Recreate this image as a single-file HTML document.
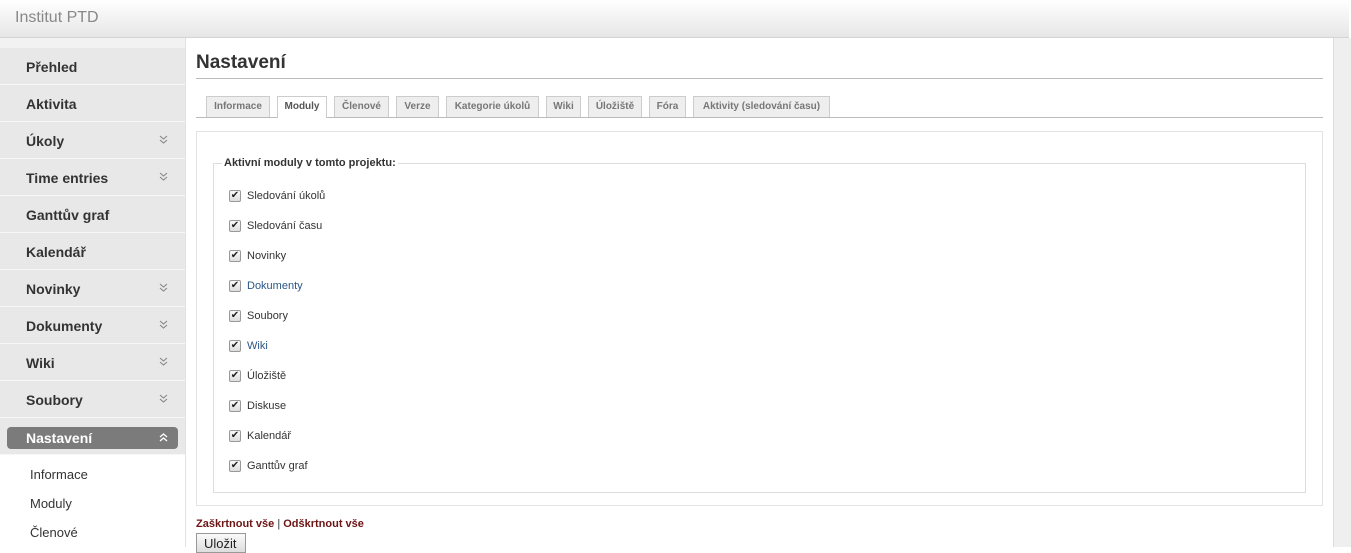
<!DOCTYPE html>
<html><head><meta charset="utf-8"><style>
*{box-sizing:border-box;margin:0;padding:0}
body{width:1351px;height:547px;overflow:hidden;background:#fff;font-family:"Liberation Sans",Arial,sans-serif;position:relative}
#hdr{position:absolute;left:0;top:0;width:1349px;height:38px;background:linear-gradient(#fff,#e6e6e6);border-bottom:1px solid #d4d4d4}
#hdr span{position:absolute;left:15px;top:9px;font-size:16px;color:#888}
#rs{position:absolute;left:1333px;top:38px;width:18px;height:509px;background:#efefef;border-left:1px solid #ddd}
#sb{position:absolute;left:0;top:38px;width:186px;height:509px;background:#fff;border-right:1px solid #e2e2e2}
#sb .top{height:10px;background:#f2f2f2}
.it{height:37px;background:#e8e8e8;border-bottom:1px solid #f7f7f7;position:relative;font-size:14px;font-weight:bold;color:#333;padding:11px 0 0 26px}
.it svg{position:absolute;left:159px;top:13px}
.act{background:#e8e8e8;height:37px;padding:9px 7px 0 7px;border-bottom:1px solid #f7f7f7}
.act div{background:#7b7b7b;border-radius:4px;height:22px;color:#fff;font-size:14px;font-weight:bold;padding:3px 0 0 19px;position:relative}
.act svg{position:absolute;left:152px;top:6px}
.sub{font-size:13px;color:#333;padding-left:30px;height:29px;line-height:20px}
h2{position:absolute;left:196px;top:52px;font-size:19px;color:#333}
#hl{position:absolute;left:196px;top:78px;width:1127px;border-top:1px solid #bbb}
#tabs{position:absolute;left:196px;top:117px;width:1127px;border-top:1px solid #bbb}
.tab{position:absolute;top:96px;height:21px;border:1px solid #ccc;border-bottom:none;background:#eee;font-size:10px;font-weight:bold;color:#777;text-align:center;line-height:20px}
.tab.sel{background:#fff;color:#555;height:22px;z-index:2}
#box{position:absolute;left:196px;top:131px;width:1127px;height:375px;border:1px solid #e3e3e3}
#fs{position:absolute;left:213px;top:163px;width:1093px;height:330px;border:1px solid #ddd}
#lg{position:absolute;left:222px;top:157px;background:#fff;padding:0 2px;font-size:11px;font-weight:bold;color:#333}
.cb{position:absolute;left:229px;width:12px;height:12px;border:1px solid #999;border-radius:2px;background:linear-gradient(#fafafa,#ddd);font-size:10px;line-height:10px;text-align:center;color:#222}
.lb{position:absolute;left:247px;font-size:11px;color:#333;margin-top:1px}
.lb.b{color:#2a5685}
#links{position:absolute;left:196px;top:518px;font-size:11px;font-weight:bold;color:#6d1414}
#links span{color:#333;font-weight:normal}
#btn{position:absolute;left:196px;top:533px;width:50px;height:20px;border:1px solid #999;background:linear-gradient(#fafafa,#ddd);font-size:13px;padding:2px 0 0 7px;color:#222}
</style></head><body>
<div id="hdr"><span>Institut PTD</span></div>
<div id="rs"></div>
<div id="sb"><div class="top"></div>
<div class="it">Přehled</div><div class="it">Aktivita</div>
<div class="it">Úkoly<svg width="9" height="9"><path d="M1 1l3.5 3 3.5-3M1 5l3.5 3 3.5-3" fill="none" stroke="#888" stroke-width="1.1"/></svg></div>
<div class="it">Time entries<svg width="9" height="9"><path d="M1 1l3.5 3 3.5-3M1 5l3.5 3 3.5-3" fill="none" stroke="#888" stroke-width="1.1"/></svg></div>
<div class="it">Ganttův graf</div><div class="it">Kalendář</div>
<div class="it">Novinky<svg width="9" height="9"><path d="M1 1l3.5 3 3.5-3M1 5l3.5 3 3.5-3" fill="none" stroke="#888" stroke-width="1.1"/></svg></div>
<div class="it">Dokumenty<svg width="9" height="9"><path d="M1 1l3.5 3 3.5-3M1 5l3.5 3 3.5-3" fill="none" stroke="#888" stroke-width="1.1"/></svg></div>
<div class="it">Wiki<svg width="9" height="9"><path d="M1 1l3.5 3 3.5-3M1 5l3.5 3 3.5-3" fill="none" stroke="#888" stroke-width="1.1"/></svg></div>
<div class="it">Soubory<svg width="9" height="9"><path d="M1 1l3.5 3 3.5-3M1 5l3.5 3 3.5-3" fill="none" stroke="#888" stroke-width="1.1"/></svg></div>
<div class="act"><div>Nastavení<svg width="9" height="9"><path d="M1 4l3.5-3 3.5 3M1 8l3.5-3 3.5 3" fill="none" stroke="#fff" stroke-width="1.3"/></svg></div></div>
<div style="height:10px"></div>
<div class="sub">Informace</div><div class="sub">Moduly</div><div class="sub">Členové</div>
</div>
<h2>Nastavení</h2><div id="hl"></div>
<div class="tab" style="left:206px;width:64px">Informace</div>
<div class="tab sel" style="left:277px;width:50px">Moduly</div>
<div class="tab" style="left:334px;width:55px">Členové</div>
<div class="tab" style="left:396px;width:43px">Verze</div>
<div class="tab" style="left:446px;width:93px">Kategorie úkolů</div>
<div class="tab" style="left:546px;width:35px">Wiki</div>
<div class="tab" style="left:588px;width:54px">Úložiště</div>
<div class="tab" style="left:649px;width:37px">Fóra</div>
<div class="tab" style="left:693px;width:137px">Aktivity (sledování času)</div>
<div id="tabs"></div>
<div id="box"></div><div id="fs"></div>
<div id="lg">Aktivní moduly v tomto projektu:</div>
<div class="cb" style="top:190px">✔</div><div class="lb" style="top:189px">Sledování úkolů</div>
<div class="cb" style="top:220px">✔</div><div class="lb" style="top:219px">Sledování času</div>
<div class="cb" style="top:250px">✔</div><div class="lb" style="top:249px">Novinky</div>
<div class="cb" style="top:280px">✔</div><div class="lb b" style="top:279px">Dokumenty</div>
<div class="cb" style="top:310px">✔</div><div class="lb" style="top:309px">Soubory</div>
<div class="cb" style="top:340px">✔</div><div class="lb b" style="top:339px">Wiki</div>
<div class="cb" style="top:370px">✔</div><div class="lb" style="top:369px">Úložiště</div>
<div class="cb" style="top:400px">✔</div><div class="lb" style="top:399px">Diskuse</div>
<div class="cb" style="top:430px">✔</div><div class="lb" style="top:429px">Kalendář</div>
<div class="cb" style="top:460px">✔</div><div class="lb" style="top:459px">Ganttův graf</div>
<div id="links">Zaškrtnout vše <span>|</span> Odškrtnout vše</div>
<div id="btn">Uložit</div>
</body></html>
